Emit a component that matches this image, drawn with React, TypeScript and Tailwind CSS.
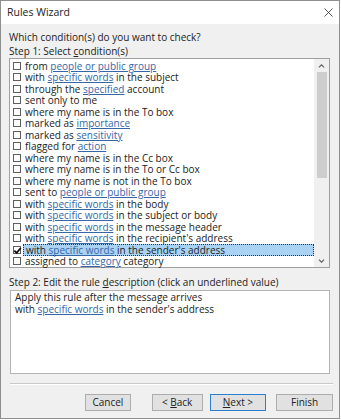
import clsx from 'clsx';

// Outlook "Rules Wizard" step 1 — condition picker.

type Seg = string | { link: string };

interface Condition {
  parts: Seg[];
  checked?: boolean;
}

const CONDITIONS: Condition[] = [
  { parts: ['from ', { link: 'people or public group' }] },
  { parts: ['with ', { link: 'specific words' }, ' in the subject'] },
  { parts: ['through the ', { link: 'specified' }, ' account'] },
  { parts: ['sent only to me'] },
  { parts: ['where my name is in the To box'] },
  { parts: ['marked as ', { link: 'importance' }] },
  { parts: ['marked as ', { link: 'sensitivity' }] },
  { parts: ['flagged for ', { link: 'action' }] },
  { parts: ['where my name is in the Cc box'] },
  { parts: ['where my name is in the To or Cc box'] },
  { parts: ['where my name is not in the To box'] },
  { parts: ['sent to ', { link: 'people or public group' }] },
  { parts: ['with ', { link: 'specific words' }, ' in the body'] },
  { parts: ['with ', { link: 'specific words' }, ' in the subject or body'] },
  { parts: ['with ', { link: 'specific words' }, ' in the message header'] },
  { parts: ['with ', { link: 'specific words' }, " in the recipient's address"] },
  { parts: ['with ', { link: 'specific words' }, " in the sender's address"], checked: true },
  { parts: ['assigned to ', { link: 'category' }, ' category'] },
];

function Parts({ parts }: { parts: Seg[] }) {
  return (
    <>
      {parts.map((p, i) =>
        typeof p === 'string' ? (
          <span key={i} className="whitespace-pre">{p}</span>
        ) : (
          <span key={i} className="whitespace-pre text-[#3566a8] underline underline-offset-[1px]">
            {p.link}
          </span>
        ),
      )}
    </>
  );
}

function CheckBox({ checked }: { checked?: boolean }) {
  return (
    <span className="relative flex h-[8px] w-[8px] shrink-0 border border-[#5f5f5f] bg-white">
      {checked && (
        <svg
          viewBox="0 0 10 10"
          className="absolute left-[-1px] top-[-1px] h-[9px] w-[9px]"
          aria-hidden
        >
          <path d="M1.5 5.2 L4 7.6 L8.6 2.2" fill="none" stroke="#111" strokeWidth="2" />
        </svg>
      )}
    </span>
  );
}

function Chevron({ up }: { up?: boolean }) {
  return (
    <svg viewBox="0 0 8 5" className="h-[4px] w-[7px]" aria-hidden>
      <path
        d={up ? 'M0.8 4.2 L4 1 L7.2 4.2' : 'M0.8 0.8 L4 4 L7.2 0.8'}
        fill="none"
        stroke="#606060"
        strokeWidth="1.4"
      />
    </svg>
  );
}

function Button({ children, focused, className }: { children: React.ReactNode; focused?: boolean; className?: string }) {
  return (
    <button
      type="button"
      className={clsx(
        'flex h-[17px] items-center justify-center whitespace-pre bg-[#e1e1e1] text-[10px] text-[#222]',
        focused ? 'border border-[#2a7fd0]' : 'border border-[#adadad]',
        className,
      )}
    >
      {children}
    </button>
  );
}

export default function App() {
  return (
    <div className="h-[420px] w-[341px] bg-white font-['Open_Sans','Noto_Sans',sans-serif] text-[10px] text-[#222]">
      <div className="flex h-[419px] w-[340px] flex-col border border-[#8f8f8f] bg-[#f0f0f0]">
        <header className="flex h-[23px] shrink-0 items-center justify-between bg-white pl-[6px] pr-[6px]">
          <span className="text-[10.5px] leading-none text-[#222]">Rules Wizard</span>
          <svg viewBox="0 0 10 10" className="h-[9px] w-[9px]" aria-hidden>
            <path d="M0.5 0.5 L9.5 9.5 M9.5 0.5 L0.5 9.5" stroke="#333" strokeWidth="0.9" />
          </svg>
        </header>

        <div className="flex flex-1 flex-col pl-[8px] pr-[9px] pt-[6px]">
          <p className="leading-[14px]">Which condition(s) do you want to check?</p>
          <p className="leading-[14px]">
            Step 1: Select <span className="underline underline-offset-[1px]">c</span>ondition(s)
          </p>

          <div className="flex h-[210px] border border-[#a0a0a0] bg-white">
            <ul className="flex-1 pt-[1px]">
              {CONDITIONS.map((c, i) => (
                <li key={i} className="flex h-[11.5px] items-center pl-[3px]">
                  <CheckBox checked={c.checked} />
                  <span
                    className={clsx(
                      'ml-[2px] flex h-full flex-1 items-center pl-[2px] leading-none',
                      c.checked && 'border border-dotted border-[#333] bg-[#a9d2f3]',
                    )}
                  >
                    <Parts parts={c.parts} />
                  </span>
                </li>
              ))}
            </ul>
            <div className="flex w-[15px] flex-col items-center bg-[#f0f0f0]">
              <div className="flex h-[13px] items-center justify-center">
                <Chevron up />
              </div>
              <div className="h-[106px] w-[10px] bg-[#cdcdcd]" />
              <div className="flex-1" />
              <div className="flex h-[12px] items-center justify-center">
                <Chevron />
              </div>
            </div>
          </div>

          <p className="mt-[7px] leading-[14px]">
            Step 2: Edit the rule <span className="underline underline-offset-[1px]">d</span>escription (click an
            underlined value)
          </p>
          <div className="ml-[1px] mt-[1px] h-[84px] border border-[#b4b4b4] bg-white pl-[4px] pt-[1px] leading-[11.5px]">
            <p>Apply this rule after the message arrives</p>
            <p>
              <Parts parts={['with ', { link: 'specific words' }, " in the sender's address"]} />
            </p>
          </div>

          <div className="ml-[1px] mr-[-3px] mt-[9px] h-[2px] border-t border-[#c8c8c8] border-b border-b-white" />

          <div className="mr-[-3px] mt-[9px] flex">
            <Button className="ml-[76px] w-[46px]">Cancel</Button>
            <Button className="ml-[21px] w-[51px]">
              <span>{'< '}</span>
              <span className="underline underline-offset-[1px]">B</span>
              <span>ack</span>
            </Button>
            <Button className="ml-[7px] w-[57px]" focused>
              <span className="underline underline-offset-[1px]">N</span>
              <span>{'ext >'}</span>
            </Button>
            <Button className="ml-[10px] w-[57px]">Finish</Button>
          </div>
        </div>
      </div>
    </div>
  );
}
